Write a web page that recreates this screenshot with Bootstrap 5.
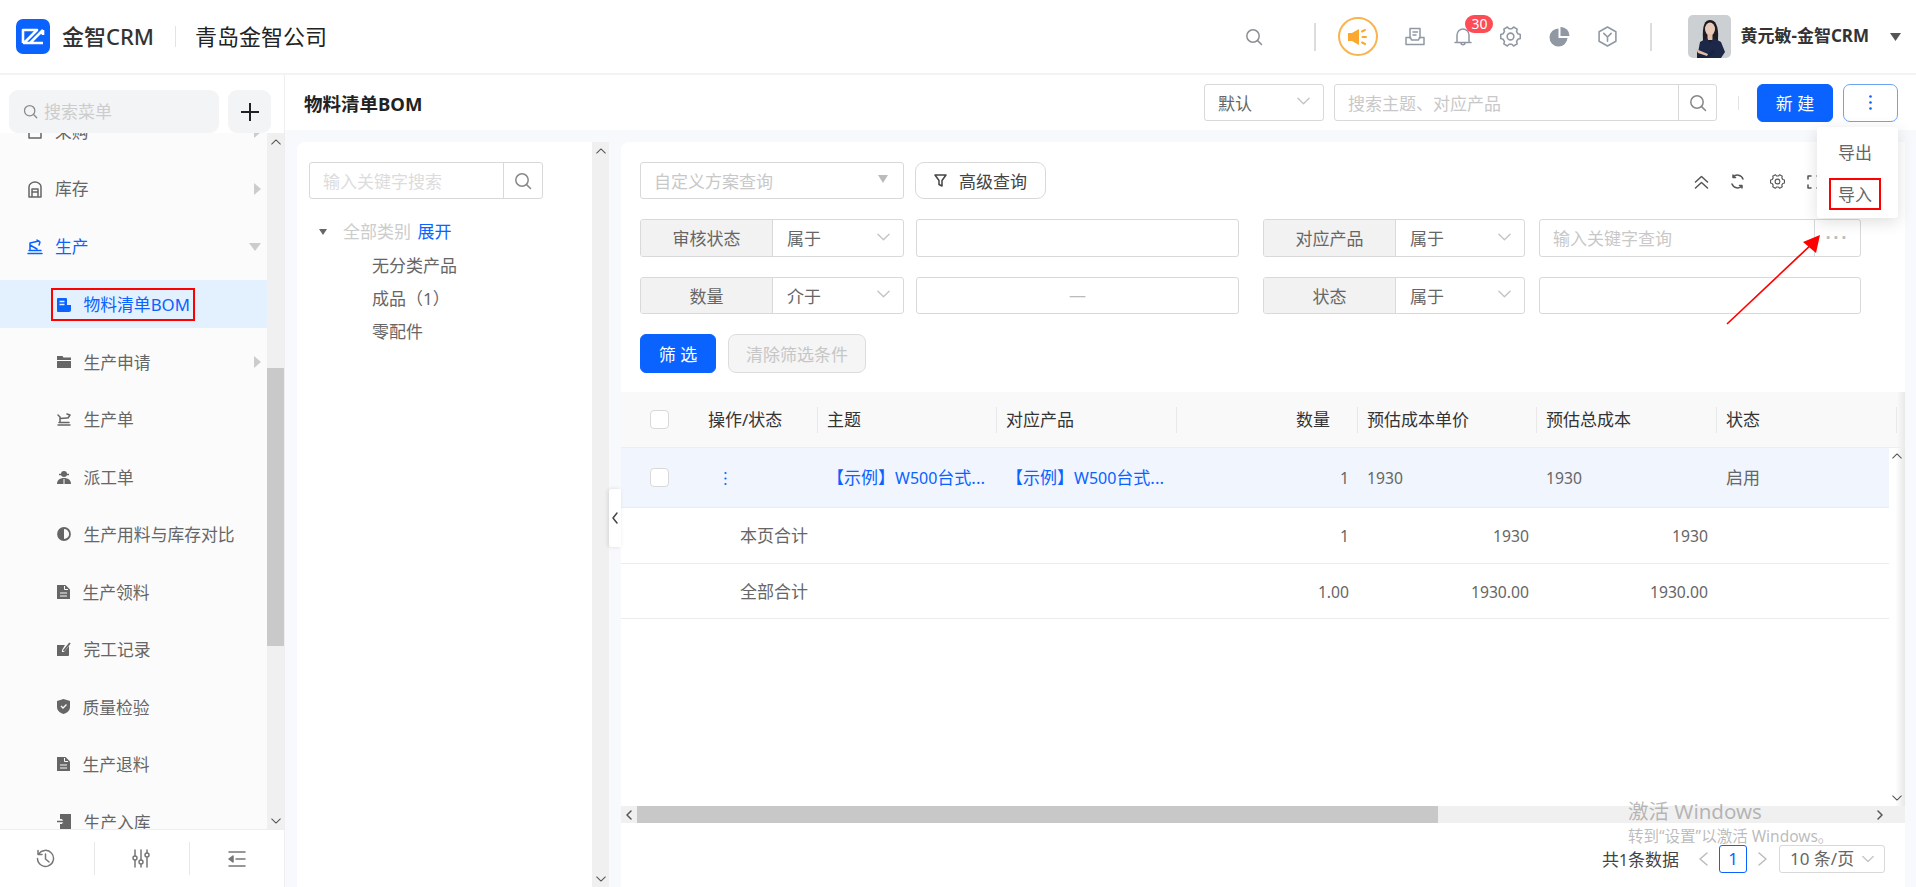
<!DOCTYPE html>
<html lang="zh-CN">
<head>
<meta charset="utf-8">
<title>物料清单BOM</title>
<link href="https://cdn.jsdelivr.net/npm/bootstrap@5.3.0/dist/css/bootstrap.min.css" rel="stylesheet">
<style>
html,body{height:100%;overflow:hidden}
body{font-family:"Noto Sans","Noto Sans CJK SC",sans-serif;font-size:17px;color:#666;background:#f7f9fd;position:relative;line-height:1.3}
svg{display:block;flex:none}
.ic{fill:none;stroke:currentColor;stroke-width:1.5;stroke-linecap:round;stroke-linejoin:round}
.topbar{height:75px;background:#fff;border-bottom:2px solid #f3f3f3;padding-left:16px}
.logo-name{font-size:22px;color:#333;margin-left:12px;font-weight:500;width:105px}
.vline{width:1px;background:#e3e3e3;height:21px}
.org{font-size:22px;color:#222;margin-left:19px}
.tools{padding-right:15px}
.tall{height:28px;background:#dcdcdc;width:2px}
.horn{width:40px;height:39px;border:2px solid #f9b44f;border-radius:50%;color:#fba82e}
.tool-i{color:#8f98a3}
.bell-wrap{position:relative;width:18px}
.bell-badge{position:absolute;left:11px;top:-12px;width:28px;height:18px;background:#fd4c55;color:#fff;font-size:14px;line-height:18px;border-radius:9px;text-align:center}
.face{width:43px;height:43px;border-radius:5px;overflow:hidden}
.who{font-size:17px;font-weight:700;color:#333;margin-left:9px;white-space:nowrap}
.below{height:812px}
.side{width:285px;background:#fbfbfb;border-right:1px solid #eee}
.side-top{padding:15px 13px 0 9px;gap:9px;background:#fff;position:relative;z-index:2}
.menu-search{height:43px;width:211px;background:#f3f4f6;border-radius:9px;color:#ccc;padding-left:14px;gap:6px}
.menu-search span{padding-top:2px}
.plus-btn{width:43px;height:43px;background:#f3f4f6;border-radius:9px;color:#222}
.menu-zone{min-height:0}
.menu-list{width:267px;overflow:hidden}
.menu-inner{margin-top:-25.5px;font-size:16.8px}
.m-row{height:48px;margin-bottom:9.5px;color:#666;white-space:nowrap}
.m-top{padding-left:27px;gap:12px}
.m-sub{padding-left:57px;gap:12.500px}
.m-sub span{padding-top:2px}
.m-row.on{color:#0a63ff}
.m-row.sel{background:#e3f0fd;color:#0a63ff;padding-left:51px}
.pick{border:2px solid #f00;height:33px;padding:0 3px 0 4px;gap:12.500px;margin-top:1px}
.m-arrow{margin-left:auto;margin-right:6px;color:#ccc}
.sbar{width:17px;background:#f0f0f0;color:#555}
.sbar-btn{height:17px}
.thumb{background:#c9c9c9}
.side-foot{height:60px;background:#fff;border-top:1px solid #eee;color:#777}
.side-foot>div{flex:1 1 0}
.foot-line{flex:none!important;width:1px;height:33px;background:#e8e8e8}
.page-bar{height:55px;background:#fff;padding:0 18px 0 19px}
.page-title{font-size:18.5px;font-weight:700;color:#222;padding-top:3px}
.fld{height:37px;border:1px solid #d9d9d9;border-radius:3px;background:#fff;font-size:17px;color:#666;line-height:1.2;padding:3px 13px 0;box-shadow:none}
.ph{color:#c8c8c8}
.chev{color:#c4c4c4;margin-left:auto;transform:translateY(-3px)}
.srch-btn{width:38px;border-left:1px solid #d9d9d9;color:#888;height:35px;margin-top:-3px}
.btn-new{width:76px;height:38px;background:#0a63ff;border-color:#0a63ff;color:#fff;font-size:17px;padding:2px 0 0;border-radius:6px}
.btn-dots{width:55px;height:38px;background:#fff;border:1px solid #6ea3ef;color:#0a63ff;border-radius:7px;padding:0}
.menu-pop{display:block;position:absolute;right:0;top:43px;width:81px;height:91px;min-width:0;border:0;border-radius:3px;box-shadow:0 4px 16px rgba(0,0,0,.13);padding:0;z-index:5}
.menu-pop .dropdown-item{padding:2px 0 0;text-align:center;color:#666;font-size:17px;width:52px;height:32px;line-height:26px;margin-left:12px}
.menu-pop .first{margin-top:11px;margin-bottom:8px}
.red-box{border:2px solid #f00}
.work{padding:12px 11px 0 12px;gap:12px;min-height:0;position:relative}
.tree{width:312px;background:#fff;border-radius:8px 0 0 0}
.tree-main{padding:20px 0 0 12px;width:295px}
.kw{width:234px}
.tree-l{padding:0;margin-top:16px}
.tree-r{height:33px;padding-top:3px}
.tree-head{padding-left:10px;gap:16px;height:33px;color:#ccc}
.tree-head span{padding-top:2px}
.tree-c{padding-left:63px;color:#666}
.blue{color:#0a63ff}
.fold-tab{position:absolute;left:324px;top:359px;width:12px;height:58px;background:#fff;box-shadow:-1px 0 4px rgba(0,0,0,.12);color:#444;z-index:3;border-radius:3px 0 0 3px}
.panel{width:1284px;background:#fff;border-radius:8px 0 0 0}
.filters{padding:20px 43px 0 19px}
.f-row{margin-bottom:20px}
.tag{background:#f2f2f2;width:132px;border-right:1px solid #d9d9d9;justify-content:center;height:100%;color:#666;white-space:nowrap;padding-top:3px}
.grp{width:264px;height:38px;padding:0;overflow:hidden}
.grp.w2{width:262px;margin-left:24px}
.grp .choice{flex:1;padding:3px 13px 0 14px;height:100%}
.f-inp{width:323px;height:38px;margin-left:12px}
.f-inp2{width:322px;height:38px;margin-left:14px;padding:0}
.f-inp2 .ph{padding:3px 0 0 13px}
.short{height:37px}
.adv-btn{width:131px;height:37px;background:#fff;border:1px solid #d9d9d9;border-radius:9px;color:#444;font-size:17px;padding:2px 0 0;margin-left:11px;gap:12px}
.adv-btn svg{margin-top:-2px}
.tools-r{margin-left:auto;color:#555;margin-right:41px;margin-top:2px}
.btn-go{width:76px;height:39px;background:#0a63ff;border-color:#0a63ff;color:#fff;font-size:17px;padding:3px 0 0;border-radius:6px}
.btn-clear{width:138px;height:39px;background:#f5f5f5;border:1px solid #ddd;color:#c6c6c6;font-size:17px;padding:3px 0 0;margin-left:12px;border-radius:8px}
.clear-row{margin-bottom:19px}
.grid-t{table-layout:fixed;margin:0;--bs-table-bg:transparent;--bs-table-border-color:#eaeaea;color:#666;font-size:17px}
.grid-h{width:1284px;background:#f9f9f9}
.grid-h th{height:55px;padding:2px 0 0 9px;font-weight:400;color:#333;vertical-align:middle;border-bottom:1px solid #eee;position:relative;white-space:nowrap}
.grid-h th.sp::after{content:"";position:absolute;right:0;top:15px;height:26px;width:1px;background:#e8e8e8}
.grid-h th.edge{background:linear-gradient(to right,#f9f9f9,#e9e9e9)}
.grid-b{width:1268px}
.grid-b td{padding:2px 0 0 9px;vertical-align:middle;white-space:nowrap;color:#666;border-bottom:1px solid #ececec}
.grid-b tr.hi td{background:#f0f5fe;height:60px}
.grid-b tr.hi td.blue{color:#0a63ff}
.grid-b tr.ts td{height:55.5px}
.grid-b .rt{text-align:right}
.num{font-size:15.7px}
.lat{font-size:16px}
.n1{padding-right:9px!important}
.n2{padding-right:8px!important}
.n3{padding-right:9px!important}
.hn{padding-right:28px!important;text-align:right}
.tick{width:19px;height:19px;border:1px solid #d9d9d9;border-radius:4px;background:#fff;margin-left:20px}
.tab-body{min-height:0}
.vbar{width:16px;background:linear-gradient(to right,#fff 40%,#e7e7e7);color:#555}
.hbar{height:17px;background:#f0f0f0;color:#555}
.hleft{width:16px}
.hthumb{width:801px;height:100%;background:#c8c8c8}
.pager{height:64px;padding:22px 20px 0 0;justify-content:flex-end;color:#555}
.pg-box{width:28px;height:28px;border:1px solid #0a63ff;border-radius:3px;color:#0a63ff;text-align:center;line-height:26px}
.pg-size{width:106px;height:28px;border:1px solid #d9d9d9;border-radius:3px;padding:0 10px;color:#666}
.pg-size .chev{transform:none}
.wm1,.wm2{position:absolute;left:1628px;color:rgba(120,120,120,.5);white-space:nowrap;z-index:4}
.wm1{top:798px;font-size:20.5px}
.wm2{top:826px;font-size:15.5px}
.arrow-mark{position:absolute;left:1720px;top:228px;z-index:6}
.small-drop{position:relative}
</style>
</head>
<body>
<svg width="0" height="0" style="position:absolute">
<defs>
<symbol id="i-search" viewBox="0 0 18 18"><circle cx="8" cy="8" r="6.2"/><path d="M12.6 12.6 16.5 16.5"/></symbol>
<symbol id="i-gear" viewBox="0 0 20 20"><path d="M19.300 8 19.300 12 17.050 12.570 15.750 14.820 16.360 17.060 12.940 19.040 11.300 17.390 8.700 17.390 7.060 19.040 3.640 17.060 4.250 14.820 2.950 12.570 .7 12 .7 8 2.950 7.430 4.250 5.180 3.640 2.940 7.060 .96 8.700 2.610 11.300 2.610 12.940 .96 16.360 2.940 15.750 5.180 17.050 7.430Z"/><circle cx="10" cy="10" r="3.2"/></symbol>
<symbol id="i-down" viewBox="0 0 14 8"><path d="M1 1 7 7 13 1"/></symbol>
</defs>
</svg>

<header class="topbar d-flex align-items-center">
  <svg width="34" height="35" viewBox="0 0 34 35"><rect width="34" height="35" rx="7" fill="#0a63ff"/><path d="M7 24V11H21L8 24H27M27 11 14 24M27 11V16" fill="none" stroke="#fff" stroke-width="2.6" stroke-linejoin="round"/></svg>
  <div class="logo-name">金智CRM</div>
  <div class="vline ms-2"></div>
  <div class="org">青岛金智公司</div>
  <div class="tools ms-auto d-flex align-items-center">
    <svg class="ic" width="18" height="18" style="color:#8a8f95"><use href="#i-search"/></svg>
    <div class="tall" style="margin:0 22px 0 51px"></div>
    <div class="horn d-flex align-items-center justify-content-center">
      <svg width="24" height="20" viewBox="0 0 24 20"><path d="M2 6h4l7-4v16l-7-4H2Z" fill="currentColor"/><path d="M16 4.500 19 3M16.500 10H20M16 15.500 19 17" stroke="currentColor" stroke-width="2" stroke-linecap="round"/></svg>
    </div>
    <svg class="ic tool-i" style="margin-left:27px" width="20" height="19" viewBox="0 0 20 19"><path d="M5 11V1.500H15V11M8 5h4.500M8 8h3"/><path d="M1 10.500h4.500l1 2.500h7l1-2.500H19V17.500H1Z"/></svg>
    <div class="bell-wrap" style="margin-left:29px">
      <svg class="ic tool-i" width="18" height="19" viewBox="0 0 18 19"><path d="M1 15.500h16M3 15.500V8a6 6 0 0 1 12 0v7.500M7 15.800a2 2 0 0 0 4 0"/></svg>
      <div class="bell-badge">30</div>
    </div>
    <svg class="ic tool-i" style="margin-left:28px" width="21" height="21"><use href="#i-gear"/></svg>
    <svg class="tool-i" style="margin-left:28px" width="21" height="20" viewBox="0 0 21 20"><path d="M9.500 1.500a9 9 0 1 0 9 9.500H9.500Z" fill="currentColor"/><path d="M11.500 0a8.800 8.800 0 0 1 9 9h-9Z" fill="currentColor"/></svg>
    <svg class="ic tool-i" style="margin-left:28px" width="19" height="21" viewBox="0 0 18 20"><path d="M9 1 17 5.500V14.500L9 19 1 14.500V5.500Z"/><path d="M5.500 7 9 10.500 12.500 7M9 10.500V14.500"/></svg>
    <div class="tall" style="margin:0 36px 0 33px"></div>
    <div class="face">
      <svg width="43" height="43" viewBox="0 0 43 43"><rect width="43" height="43" fill="#ccd0d2"/><path d="M15 25C14 10 17 5 22 5s9 5 8 20l-3 5H17Z" fill="#1f1c22"/><ellipse cx="22" cy="14" rx="5" ry="6.500" fill="#e9c9b8"/><rect x="19.500" y="19" width="5" height="6" fill="#e4c0ae"/><path d="M9 43 12 27 19 23 22 28 26 23 33 27 37 37 33 43Z" fill="#1d2747"/><path d="M9 36 20 38 26 35 27 38 19 43H9Z" fill="#1a2240"/><path d="M8 34 20 39 19 41 10 38Z" fill="#e0bcaa"/></svg>
    </div>
    <div class="who">黄元敏-金智CRM</div>
    <svg style="margin-left:21px" width="11" height="8" viewBox="0 0 11 8"><path d="M0 0h11L5.500 8Z" fill="#555"/></svg>
  </div>
</header>

<div class="below d-flex">
  <aside class="side d-flex flex-column">
    <div class="side-top d-flex">
      <div class="menu-search d-flex align-items-center">
        <svg class="ic" width="15" height="15" style="color:#888"><use href="#i-search"/></svg><span>搜索菜单</span>
      </div>
      <div class="plus-btn d-flex align-items-center justify-content-center">
        <svg width="18" height="18" viewBox="0 0 18 18"><path d="M9 0V18M0 9H18" stroke="currentColor" stroke-width="2"/></svg>
      </div>
    </div>
    <div class="menu-zone flex-grow-1 d-flex">
      <div class="menu-list">
        <div class="menu-inner">
          <div class="m-row m-top d-flex align-items-center"><svg class="ic" width="16" height="16" viewBox="0 0 16 16" stroke-width="1.300"><rect x="2" y="3" width="12" height="11"/><path d="M5 7h6"/></svg><span>采购</span><svg class="m-arrow" width="7" height="12" viewBox="0 0 7 12"><path d="M0 0 7 6 0 12Z" fill="currentColor"/></svg></div>
          <div class="m-row m-top d-flex align-items-center"><svg class="ic" width="16" height="17" viewBox="0 0 16 17"><path d="M2 16V6a6 5 0 0 1 12 0v10ZM5 16V8h6v8M5 11h6"/></svg><span>库存</span><svg class="m-arrow" width="7" height="12" viewBox="0 0 7 12"><path d="M0 0 7 6 0 12Z" fill="currentColor"/></svg></div>
          <div class="m-row m-top on d-flex align-items-center"><svg class="ic" width="16" height="16" viewBox="0 0 16 16"><path d="M1 14.500h14M2 11.500h12M3 11V4l9-2M3 6l7 4M10 1l3 2-1 3"/></svg><span>生产</span><svg class="m-arrow" style="color:#ccc" width="12" height="8" viewBox="0 0 12 8"><path d="M0 0H12L6 8Z" fill="currentColor"/></svg></div>
          <div class="m-row sel d-flex align-items-center">
            <div class="pick d-flex align-items-center">
              <svg width="14" height="14" viewBox="0 0 14 14"><path d="M0 1a1 1 0 0 1 1-1h8a1 1 0 0 1 1 1v6h4v5a2 2 0 0 1-2 2H1a1 1 0 0 1-1-1Z" fill="currentColor"/><path d="M2.500 3.500h5M2.500 6.500h5" stroke="#e3f0fd" stroke-width="1.300"/></svg>
              <span>物料清单BOM</span>
            </div>
          </div>
          <div class="m-row m-sub d-flex align-items-center"><svg width="14" height="13" viewBox="0 0 14 13"><path d="M0 1h5.500l1 1.500H14V5H0ZM0 6h14v7H0Z" fill="currentColor"/></svg><span>生产申请</span><svg class="m-arrow" width="7" height="12" viewBox="0 0 7 12"><path d="M0 0 7 6 0 12Z" fill="currentColor"/></svg></div>
          <div class="m-row m-sub d-flex align-items-center"><svg class="ic" width="14" height="13" viewBox="0 0 14 13"><path d="M1 12h12M2 9.500h10M3 9V4L1 2M3 5.500l7-.5M10 1l3 1-2 3"/></svg><span>生产单</span></div>
          <div class="m-row m-sub d-flex align-items-center"><svg width="14" height="14" viewBox="0 0 14 14"><circle cx="7" cy="4" r="3" fill="currentColor"/><path d="M2 4.500h10" stroke="currentColor" stroke-width="1.500"/><path d="M0 14c0-4 3-6 7-6s7 2 7 6Z" fill="currentColor"/><path d="M7 9v5" stroke="#fbfbfb" stroke-width="1"/></svg><span>派工单</span></div>
          <div class="m-row m-sub d-flex align-items-center"><svg width="14" height="14" viewBox="0 0 14 14"><circle cx="7" cy="7" r="6" fill="#fbfbfb" stroke="currentColor" stroke-width="1.800"/><path d="M7 1a6 6 0 0 0 0 12Z" fill="currentColor"/></svg><span>生产用料与库存对比</span></div>
          <div class="m-row m-sub d-flex align-items-center"><svg width="13" height="14" viewBox="0 0 13 14"><path d="M0 0h8.500L13 4.500V14H0Z" fill="currentColor"/><path d="M7.500 1v3.500H11M3 8h7M3 11h7" stroke="#fbfbfb" fill="none"/></svg><span>生产领料</span></div>
          <div class="m-row m-sub d-flex align-items-center"><svg width="14" height="14" viewBox="0 0 14 14"><path d="M0 3h8l-3 5v2h2l5-6v9a1 1 0 0 1-1 1H0Z" fill="currentColor"/><path d="M6.500 9 13 1" stroke="currentColor" stroke-width="1.800"/></svg><span>完工记录</span></div>
          <div class="m-row m-sub d-flex align-items-center"><svg width="13" height="15" viewBox="0 0 13 15"><path d="M6.500 0 13 2V8c0 3.500-3 6-6.500 7C3 14 0 11.500 0 8V2Z" fill="currentColor"/><path d="M4 7 6 9 9.500 5.500" stroke="#fbfbfb" stroke-width="1.300" fill="none"/></svg><span>质量检验</span></div>
          <div class="m-row m-sub d-flex align-items-center"><svg width="13" height="14" viewBox="0 0 13 14"><path d="M0 0h8.500L13 4.500V14H0Z" fill="currentColor"/><path d="M7.500 1v3.500H11M3 8h7M3 11h7" stroke="#fbfbfb" fill="none"/></svg><span>生产退料</span></div>
          <div class="m-row m-sub d-flex align-items-center"><svg width="14" height="15" viewBox="0 0 14 15"><path d="M3 0h11v15H3V10h4V5H3Z" fill="currentColor"/><path d="M0 7.500h8M5.500 5l2.500 2.500L5.500 10" stroke="#666" fill="none" stroke-width="1.500"/></svg><span>生产入库</span></div>
        </div>
      </div>
      <div class="sbar d-flex flex-column">
        <div class="sbar-btn d-flex align-items-center justify-content-center"><svg class="ic" width="10" height="6" viewBox="0 0 14 8" stroke-width="2.600" style="transform:rotate(180deg)"><use href="#i-down"/></svg></div>
        <div class="thumb" style="margin-top:218px;height:278px"></div>
        <div class="sbar-btn mt-auto d-flex align-items-center justify-content-center"><svg class="ic" width="10" height="6" viewBox="0 0 14 8" stroke-width="2.600"><use href="#i-down"/></svg></div>
      </div>
    </div>
    <div class="side-foot d-flex align-items-center">
      <div class="d-flex justify-content-center"><svg class="ic" width="19" height="19" viewBox="0 0 19 19" style="margin-left:-4px"><path d="M2.500 5.500A8 8 0 1 1 1.500 9.500M2 1.500v4h4M9.500 5v5l3.500 3"/></svg></div>
      <div class="foot-line"></div>
      <div class="d-flex justify-content-center"><svg class="ic" width="18" height="19" viewBox="0 0 18 19" style="margin-left:-2px"><path d="M3 1v6M3 11v7M9 1v10M9 15v3M15 1v3M15 8v10"/><circle cx="3" cy="9" r="2"/><circle cx="9" cy="13" r="2"/><circle cx="15" cy="6" r="2"/></svg></div>
      <div class="foot-line"></div>
      <div class="d-flex justify-content-center"><svg class="ic" width="18" height="16" viewBox="0 0 18 16"><path d="M1 1H17M8 8H17M1 15H17"/><path d="M5 5V11L1 8Z" fill="currentColor"/></svg></div>
    </div>
  </aside>

  <main class="flex-grow-1 d-flex flex-column" style="min-width:0">
    <div class="page-bar d-flex align-items-center">
      <div class="page-title">物料清单BOM</div>
      <div class="ms-auto d-flex align-items-center">
        <div class="fld d-flex align-items-center" style="width:120px">默认<svg class="ic chev" width="13" height="8"><use href="#i-down"/></svg></div>
        <div class="fld d-flex align-items-center" style="width:383px;margin-left:10px;padding-right:0"><span class="ph">搜索主题、对应产品</span>
          <div class="srch-btn ms-auto d-flex align-items-center justify-content-center"><svg class="ic" width="18" height="18"><use href="#i-search"/></svg></div>
        </div>
        <div class="vline" style="height:14px;margin:0 18px 0 21px"></div>
        <button class="btn btn-new" type="button">新 建</button>
        <div class="small-drop" style="margin-left:10px">
          <button class="btn btn-dots d-flex align-items-center justify-content-center" type="button">
            <svg width="3" height="15" viewBox="0 0 3 15"><circle cx="1.500" cy="1.500" r="1.300" fill="currentColor"/><circle cx="1.500" cy="7.500" r="1.300" fill="currentColor"/><circle cx="1.500" cy="13.500" r="1.300" fill="currentColor"/></svg>
          </button>
          <div class="dropdown-menu menu-pop">
            <div class="dropdown-item first">导出</div>
            <div class="dropdown-item red-box">导入</div>
          </div>
        </div>
      </div>
    </div>

    <div class="work flex-grow-1 d-flex">
      <section class="tree d-flex">
        <div class="tree-main">
          <div class="fld kw d-flex align-items-center" style="padding-right:0"><span class="ph" style="color:#dcdcdc">输入关键字搜索</span>
            <div class="srch-btn ms-auto d-flex align-items-center justify-content-center" style="width:39px"><svg class="ic" width="18" height="18"><use href="#i-search"/></svg></div>
          </div>
          <div class="tree-l">
            <div class="tree-head d-flex align-items-center"><svg width="8" height="6" viewBox="0 0 8 6"><path d="M0 0H8L4 6Z" fill="#666"/></svg><span>全部类别 <span class="blue" style="margin-left:2px">展开</span></span></div>
            <div class="tree-r tree-c d-flex align-items-center">无分类产品</div>
            <div class="tree-r tree-c d-flex align-items-center">成品（1）</div>
            <div class="tree-r tree-c d-flex align-items-center">零配件</div>
          </div>
        </div>
        <div class="sbar d-flex flex-column">
          <div class="sbar-btn d-flex align-items-center justify-content-center"><svg class="ic" width="10" height="6" viewBox="0 0 14 8" stroke-width="2.600" style="transform:rotate(180deg)"><use href="#i-down"/></svg></div>
          <div class="sbar-btn mt-auto d-flex align-items-center justify-content-center"><svg class="ic" width="10" height="6" viewBox="0 0 14 8" stroke-width="2.600"><use href="#i-down"/></svg></div>
        </div>
      </section>
      <div class="fold-tab d-flex align-items-center justify-content-center"><svg class="ic" width="6" height="12" viewBox="0 0 6 12" stroke-width="1.600"><path d="M5 1 1 6 5 11"/></svg></div>

      <section class="panel d-flex flex-column">
        <div class="filters">
          <div class="f-row d-flex align-items-center">
            <div class="fld d-flex align-items-center" style="width:264px"><span class="ph">自定义方案查询</span><svg class="chev" style="margin-right:2px" width="10" height="8" viewBox="0 0 10 8"><path d="M0 0H10L5 8Z" fill="#bbb"/></svg></div>
            <button class="btn adv-btn d-flex align-items-center justify-content-center" type="button"><svg class="ic" width="13" height="14" viewBox="0 0 13 14" stroke-width="1.300"><path d="M1 1H12L8 6.500V12L5 10.500V6.500Z"/></svg>高级查询</button>
            <div class="tools-r d-flex align-items-center">
              <svg class="ic" width="15" height="14" viewBox="0 0 15 14"><path d="M1.500 7 7.500 1.500 13.500 7M1.500 13 7.500 7.500 13.500 13"/></svg>
              <svg class="ic" style="margin-left:21px" width="15" height="15" viewBox="0 0 15 15"><path d="M13 5A6 6 0 0 0 3 3M2 10a6 6 0 0 0 10 2M3 1v2.500h2.500M12 14v-2.500H9.500"/></svg>
              <svg class="ic" style="margin-left:25px" width="15" height="15" stroke-width="1.300"><use href="#i-gear"/></svg>
              <svg class="ic" style="margin-left:22px" width="14" height="14" viewBox="0 0 14 14"><path d="M1 4V1H4M10 1H13V4M1 10V13H4M10 13H13V10"/></svg>
            </div>
          </div>
          <div class="f-row d-flex align-items-center">
            <div class="fld grp d-flex align-items-center"><div class="tag d-flex align-items-center">审核状态</div><div class="choice d-flex align-items-center">属于<svg class="ic chev" width="13" height="8"><use href="#i-down"/></svg></div></div>
            <div class="fld f-inp"></div>
            <div class="fld grp w2 d-flex align-items-center"><div class="tag d-flex align-items-center">对应产品</div><div class="choice d-flex align-items-center">属于<svg class="ic chev" width="13" height="8"><use href="#i-down"/></svg></div></div>
            <div class="fld f-inp2 d-flex align-items-center"><span class="ph">输入关键字查询</span><div class="ms-auto d-flex align-items-center justify-content-center" style="width:46px;height:100%;border-left:1px solid #d9d9d9;color:#bbb;letter-spacing:3px;font-weight:700">···</div></div>
          </div>
          <div class="f-row d-flex align-items-center">
            <div class="fld grp short d-flex align-items-center"><div class="tag d-flex align-items-center">数量</div><div class="choice d-flex align-items-center">介于<svg class="ic chev" width="13" height="8"><use href="#i-down"/></svg></div></div>
            <div class="fld f-inp short d-flex align-items-center justify-content-center" style="color:#bbb;padding-top:0">—</div>
            <div class="fld grp w2 short d-flex align-items-center"><div class="tag d-flex align-items-center">状态</div><div class="choice d-flex align-items-center">属于<svg class="ic chev" width="13" height="8"><use href="#i-down"/></svg></div></div>
            <div class="fld f-inp2 short"></div>
          </div>
          <div class="clear-row d-flex align-items-center">
            <button class="btn btn-go" type="button">筛 选</button>
            <button class="btn btn-clear" type="button">清除筛选条件</button>
          </div>
        </div>

        <table class="table grid-t grid-h">
          <colgroup><col style="width:60px"><col style="width:137px"><col style="width:179px"><col style="width:180px"><col style="width:181px"><col style="width:179px"><col style="width:180px"><col style="width:180px"><col style="width:8px"></colgroup>
          <thead><tr>
            <th class="p-0"><div class="tick" style="margin-left:29px"></div></th>
            <th class="sp" style="padding-left:27px">操作/状态</th>
            <th class="sp">主题</th>
            <th class="sp">对应产品</th>
            <th class="sp hn">数量</th>
            <th class="sp">预估成本单价</th>
            <th class="sp">预估总成本</th>
            <th class="sp">状态</th>
            <th class="edge"></th>
          </tr></thead>
        </table>

        <div class="tab-body flex-grow-1 d-flex">
          <div class="flex-grow-1" style="min-width:0">
            <table class="table grid-t grid-b">
              <colgroup><col style="width:60px"><col style="width:137px"><col style="width:179px"><col style="width:180px"><col style="width:181px"><col style="width:179px"><col style="width:180px"><col style="width:172px"></colgroup>
              <tbody>
                <tr class="hi">
                  <td class="p-0"><div class="tick" style="margin-left:29px"></div></td>
                  <td style="padding-left:43px"><svg width="3" height="15" viewBox="0 0 3 15"><circle cx="1.500" cy="2" r="1.100" fill="#0a63ff"/><circle cx="1.500" cy="7.500" r="1.100" fill="#0a63ff"/><circle cx="1.500" cy="13" r="1.100" fill="#0a63ff"/></svg></td>
                  <td class="blue">【示例】<span class="lat">W500</span>台式...</td>
                  <td class="blue">【示例】<span class="lat">W500</span>台式...</td>
                  <td class="rt n1 num">1</td>
                  <td class="num">1930</td>
                  <td class="num">1930</td>
                  <td>启用</td>
                </tr>
                <tr class="ts">
                  <td></td><td style="padding-left:59px">本页合计</td><td></td><td></td><td class="rt n1 num">1</td><td class="rt n2 num">1930</td><td class="rt n3 num">1930</td><td></td>
                </tr>
                <tr class="ts">
                  <td></td><td style="padding-left:59px">全部合计</td><td></td><td></td><td class="rt n1 num">1.00</td><td class="rt n2 num">1930.00</td><td class="rt n3 num">1930.00</td><td></td>
                </tr>
              </tbody>
            </table>
          </div>
          <div class="vbar d-flex flex-column">
            <div class="sbar-btn d-flex align-items-center justify-content-center"><svg class="ic" width="10" height="6" viewBox="0 0 14 8" stroke-width="2.600" style="transform:rotate(180deg)"><use href="#i-down"/></svg></div>
            <div class="sbar-btn mt-auto d-flex align-items-center justify-content-center"><svg class="ic" width="10" height="6" viewBox="0 0 14 8" stroke-width="2.600"><use href="#i-down"/></svg></div>
          </div>
        </div>

        <div class="hbar d-flex align-items-center">
          <div class="hleft d-flex align-items-center justify-content-center"><svg class="ic" width="6" height="10" viewBox="0 0 6 10" stroke-width="2"><path d="M5 1 1 5 5 9"/></svg></div>
          <div class="hthumb"></div>
          <svg class="ic ms-auto" style="margin-right:22px" width="6" height="10" viewBox="0 0 6 10" stroke-width="2"><path d="M1 1 5 5 1 9"/></svg>
        </div>

        <div class="pager d-flex align-items-start">
          <div class="d-flex align-items-center">
            <span style="margin-right:20px;color:#444;padding-top:2px">共<span class="num">1</span>条数据</span>
            <svg class="ic" style="color:#bbb" width="9" height="14" viewBox="0 0 9 14" stroke-width="1.300"><path d="M8 1 1 7 8 13"/></svg>
            <div class="pg-box" style="margin:0 11px">1</div>
            <svg class="ic" style="color:#bbb" width="9" height="14" viewBox="0 0 9 14" stroke-width="1.300"><path d="M1 1 8 7 1 13"/></svg>
            <div class="pg-size d-flex align-items-center" style="margin-left:12px">10 条/页<svg class="ic chev" width="12" height="8"><use href="#i-down"/></svg></div>
          </div>
        </div>
      </section>
    </div>
  </main>
</div>

<div class="wm1">激活 Windows</div>
<div class="wm2">转到“设置”以激活 Windows。</div>
<svg class="arrow-mark" width="110" height="100" viewBox="0 0 110 100"><path d="M7 96 94 14" stroke="#f00" stroke-width="1.700"/><path d="M100 7 96 25 83 14Z" fill="#f00"/></svg>
<script src="https://cdn.jsdelivr.net/npm/bootstrap@5.3.0/dist/js/bootstrap.bundle.min.js"></script>
</body>
</html>
